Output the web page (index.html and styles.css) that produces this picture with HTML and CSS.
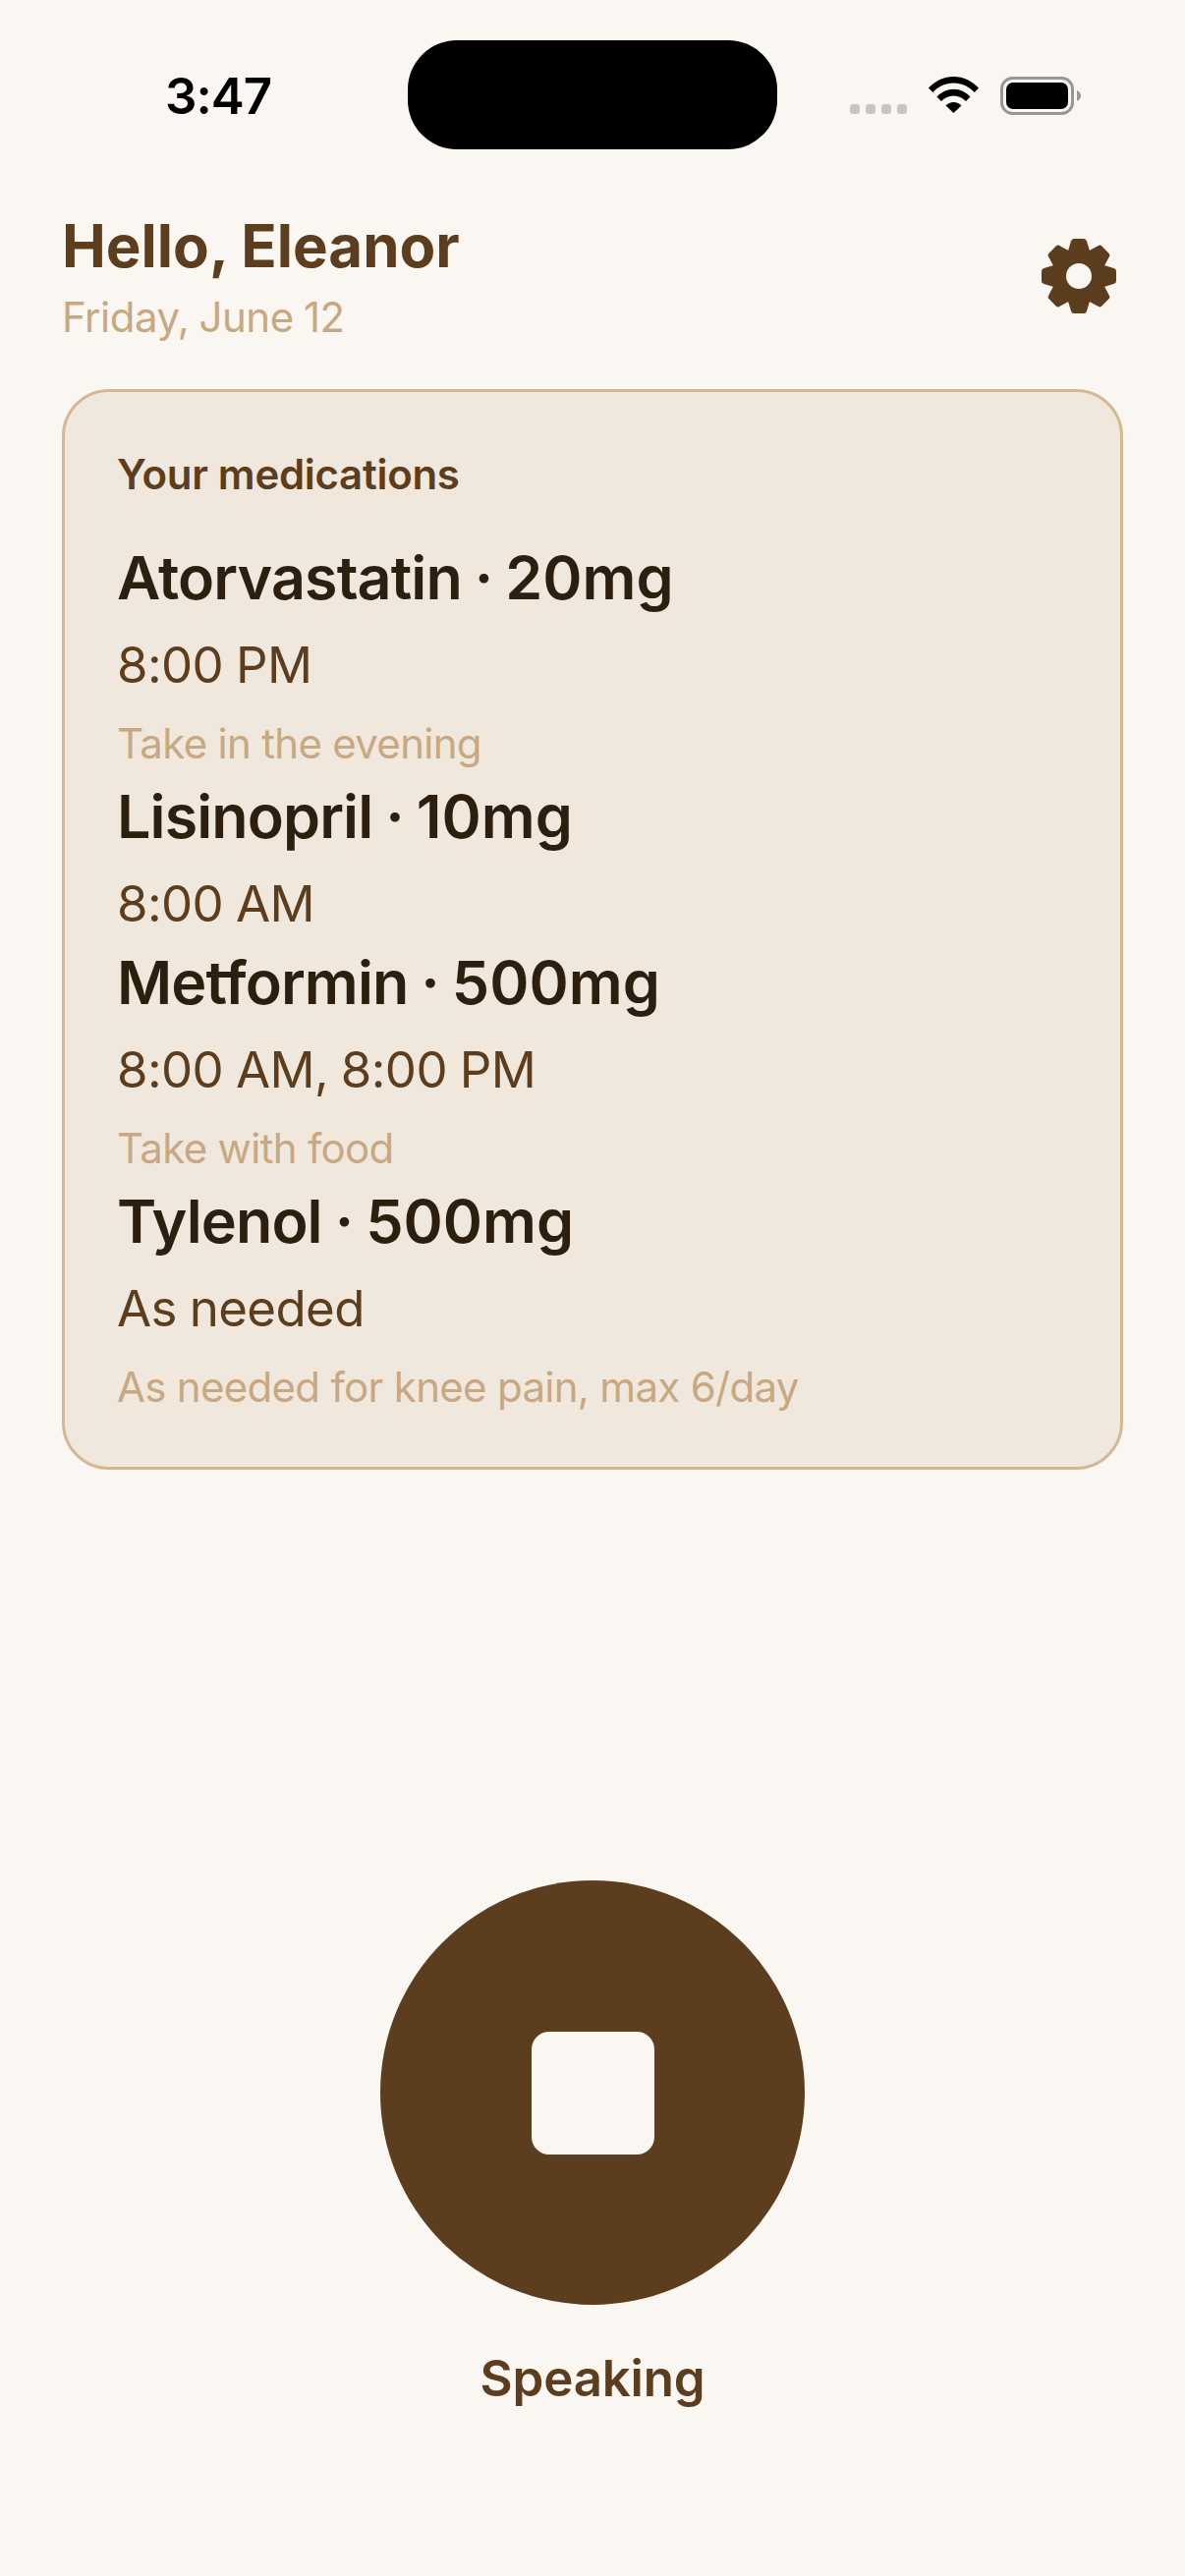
FILE: index.html
```html
<!DOCTYPE html>
<html lang="en">
<head>
    <meta charset="UTF-8">
    <meta name="viewport" content="width=device-width, initial-scale=1.0">
    <title>Medications</title>
    <link rel="stylesheet" href="styles.css">
</head>
<body>
    <div class="status-bar">
        <div class="status-left"><span class="clock">3:47</span></div>
        <div class="island"></div>
        <div class="status-right">
            <div class="signal"><i></i><i></i><i></i><i></i></div>
            <svg class="wifi" width="51" height="37" viewBox="0 0 51 37">
                <path d="M0 11.500C6.800 4.300 15.700 0 25.500 0S44.200 4.300 51 11.500L46.800 16C41.200 10.100 33.800 6.500 25.500 6.500S9.800 10.100 4.200 16Z"/>
                <path d="M8.500 20.500C13 15.700 19 12.800 25.500 12.800S38 15.700 42.500 20.500L38 25C34.700 21.500 30.300 19.400 25.500 19.400S16.300 21.500 13 25Z"/>
                <path d="M17.500 29.500C19.600 27.300 22.400 26 25.500 26S31.400 27.300 33.500 29.500L25.500 37Z"/>
            </svg>
            <svg class="battery" width="82" height="39" viewBox="0 0 82 39">
                <rect x="1.500" y="1.500" width="72" height="36" rx="11" fill="none" stroke="#999791" stroke-width="3"/>
                <rect x="6" y="6" width="63" height="27" rx="7" fill="#000"/>
                <path d="M78 14C80.500 15 82 17 82 19.500S80.500 24 78 25Z" fill="#999791"/>
            </svg>
        </div>
    </div>

    <div class="header">
        <div>
            <h1 class="greeting">Hello, Eleanor</h1>
            <p class="date">Friday, June 12</p>
        </div>
        <svg class="gear" width="76" height="76" viewBox="-38 -38 76 76">
            <defs>
                <path id="tooth" d="M-11.500 -24L-8 -35.500Q-7.500 -38 -5 -38L5 -38Q7.500 -38 8 -35.500L11.500 -24Z"/>
            </defs>
            <circle r="20.500" fill="none" stroke="#5c3d1e" stroke-width="15"/>
            <use href="#tooth"/>
            <use href="#tooth" transform="rotate(45)"/>
            <use href="#tooth" transform="rotate(90)"/>
            <use href="#tooth" transform="rotate(135)"/>
            <use href="#tooth" transform="rotate(180)"/>
            <use href="#tooth" transform="rotate(225)"/>
            <use href="#tooth" transform="rotate(270)"/>
            <use href="#tooth" transform="rotate(315)"/>
        </svg>
    </div>

    <div class="card">
        <h2 class="card-title">Your medications</h2>
        <div class="med">
            <p class="med-name">Atorvastatin · <span class="med-dose">20mg</span></p>
            <p class="med-time">8:00 PM</p>
            <p class="med-note">Take in the evening</p>
        </div>
        <div class="med">
            <p class="med-name">Lisinopril · <span class="med-dose">10mg</span></p>
            <p class="med-time">8:00 AM</p>
        </div>
        <div class="med">
            <p class="med-name">Metformin · <span class="med-dose">500mg</span></p>
            <p class="med-time">8:00 AM, 8:00 PM</p>
            <p class="med-note">Take with food</p>
        </div>
        <div class="med">
            <p class="med-name">Tylenol · <span class="med-dose">500mg</span></p>
            <p class="med-time">As needed</p>
            <p class="med-note">As needed for knee pain, max 6/day</p>
        </div>
    </div>

    <div class="voice">
        <button class="voice-button" type="button"><span class="stop-icon"></span></button>
        <p class="voice-label">Speaking</p>
    </div>
</body>
</html>
```

FILE: styles.css
```css
* {
    box-sizing: border-box;
}

html, body {
    margin: 0;
    height: 2622px;
}

body {
    display: flex;
    flex-direction: column;
    overflow: hidden;
    background-color: #faf7f2;
    font-family: Inter, "Noto Sans", sans-serif;
    color: #5c3d1e;
}

p, h1, h2 {
    margin: 0;
}

.status-bar {
    display: flex;
    height: 152px;
    padding-top: 41px;
}

.status-left {
    width: 415px;
    padding: 29px 0 0 168px;
}

.clock {
    font-size: 51px;
    line-height: 56px;
    font-weight: 600;
    letter-spacing: -1px;
    color: #000;
}

.island {
    width: 376px;
    height: 111px;
    border-radius: 50px;
    background-color: #000;
}

.status-right {
    display: flex;
    align-items: flex-start;
    padding: 37px 0 0 74px;
}

.signal {
    display: flex;
    gap: 6px;
    margin-top: 28px;
}

.signal i {
    width: 10px;
    height: 10px;
    border-radius: 3px;
    background-color: #c9c6c0;
}

.wifi {
    margin-left: 22px;
}

.battery {
    margin-left: 22px;
}

.header {
    display: flex;
    justify-content: space-between;
    align-items: flex-start;
    padding: 62px 70px 0 63px;
}

.greeting {
    font-size: 60px;
    line-height: 72px;
    font-weight: 700;
}

.date {
    margin-top: 13px;
    font-size: 42px;
    line-height: 48px;
    letter-spacing: -0.5px;
    word-spacing: -1px;
    color: #c8a882;
}

.gear {
    margin-top: 29px;
    fill: #5c3d1e;
}

.card {
    margin: 49px 63px 0;
    padding: 58px 54px 53px 53px;
    border: 3px solid #d4b896;
    border-radius: 48px;
    background-color: #f0e8dd;
}

.card-title {
    margin-bottom: 33px;
    font-size: 42px;
    line-height: 52px;
    font-weight: 600;
    letter-spacing: -0.3px;
}

.med-name {
    padding-top: 10px;
    font-size: 61px;
    line-height: 72px;
    font-weight: 600;
    letter-spacing: -0.9px;
    word-spacing: -1.5px;
    color: #2c1f0e;
}

.med-dose {
    letter-spacing: 0;
}

.med-time {
    margin-top: 22px;
    font-size: 51px;
    line-height: 62px;
    letter-spacing: -0.6px;
    word-spacing: -1px;
}

.med-note {
    margin-top: 20px;
    font-size: 42px;
    line-height: 52px;
    letter-spacing: -0.7px;
    color: #c8a882;
}

.med-time {
    padding-bottom: 3px;
}

.med-note {
    padding-bottom: 2px;
}

.voice {
    display: flex;
    flex-direction: column;
    align-items: center;
    margin-top: auto;
    padding-bottom: 170px;
}

.voice-button {
    display: flex;
    justify-content: center;
    align-items: center;
    width: 432px;
    height: 432px;
    padding: 0;
    border: none;
    border-radius: 50%;
    background-color: #5c3d1e;
}

.stop-icon {
    width: 125px;
    height: 125px;
    border-radius: 18px;
    background-color: #faf7f2;
}

.voice-label {
    margin-top: 44px;
    font-size: 51px;
    line-height: 62px;
    font-weight: 600;
    letter-spacing: -0.2px;
}
```
